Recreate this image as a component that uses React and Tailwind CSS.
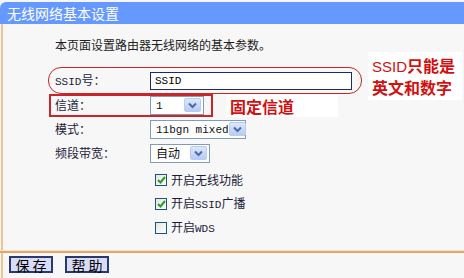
import React from 'react';

const cjk = { fontFamily: '"Noto Sans CJK SC", "Noto Sans", sans-serif' };

const Arrow = () => (
    <div className="ml-auto mr-[2px] shrink-0 w-[17px] h-[14px] rounded-[2px] border border-[#b9cbf3] bg-gradient-to-b from-[#dde7fd] to-[#b7cbf7] flex items-center justify-center">
        <svg width="9" height="7" viewBox="0 0 9 7">
            <path d="M1 1.5 L4.5 5 L8 1.5" fill="none" stroke="#4d6aa0" strokeWidth="2" />
        </svg>
    </div>
);

const Select = ({ width, children }) => (
    <div className={`${width} h-[19px] border border-[#7f9db9] bg-white flex items-center pl-[5px]`}>
        <span className="text-[12px] text-[#111] whitespace-nowrap">{children}</span>
        <Arrow />
    </div>
);

const Row = ({ label, children }) => (
    <div className="flex items-center h-[24px]">
        <div className="w-[95px] text-[12px] text-[#1b1b3a] whitespace-nowrap">{label}</div>
        {children}
    </div>
);

const Check = ({ checked, children }) => (
    <div className="flex items-center h-[24px] pl-[100px]">
        <div className="w-[12px] h-[12px] border border-[#1c5180] bg-gradient-to-br from-[#e6e6e0] to-white flex items-center justify-center">
            {checked && (
                <svg width="9" height="8" viewBox="0 0 9 8">
                    <path d="M1 4 L3.5 6.5 L8 1" fill="none" stroke="#21a121" strokeWidth="2" />
                </svg>
            )}
        </div>
        <span className="ml-[4px] text-[12px] text-[#1b1b3a]">{children}</span>
    </div>
);

const Mono = ({ children }) => (
    <span className="font-['Liberation_Mono',monospace] text-[11px] whitespace-nowrap">{children}</span>
);

const App = () => {
    return (
        <div className="relative w-[464px] h-[278px] bg-[#f7f7f7] overflow-hidden" style={cjk}>
            <div className="mt-[2px] h-[22px] bg-[#6699ff] rounded-tl-[6px] flex items-center pl-[7px] text-white text-[14px]">
                无线网络基本设置
            </div>

            <div className="ml-[1px] border-l-2 border-[#f0c48e] h-[226px] pl-[52px] pt-[12px]">
                <div className="h-[18px] flex items-center text-[12px] text-[#222]">
                    本页面设置路由器无线网络的基本参数。
                </div>
                <div className="h-[15px]" />
                <Row label={<><Mono>SSID</Mono>号：</>}>
                    <div className="w-[202px] h-[18px] border border-[#1b2a6b] bg-white flex items-center pl-[4px]">
                        <Mono>SSID</Mono>
                    </div>
                </Row>
                <Row label="信道：">
                    <Select width="w-[54px]"><Mono>1</Mono></Select>
                </Row>
                <Row label="模式：">
                    <Select width="w-[96px]"><Mono>11bgn mixed</Mono></Select>
                </Row>
                <Row label="频段带宽：">
                    <Select width="w-[60px]">自动</Select>
                </Row>
                <div className="h-[3px]" />
                <Check checked>开启无线功能</Check>
                <Check checked>开启<Mono>SSID</Mono>广播</Check>
                <Check>开启<Mono>WDS</Mono></Check>
            </div>

            <div className="h-[1px] bg-[#fbe2c2]" />
            <div className="h-[2px] bg-[#e2a768]" />
            <div className="ml-[1px] border-l-2 border-[#f0c48e] h-[27px] flex items-start gap-[12px] pl-[6px] pt-[3px]">
                <button className="w-[44px] h-[17px] border-2 border-[#2b3a6e] bg-[#d9dcf6] text-[14px] leading-none text-black flex items-center justify-center">
                    保 存
                </button>
                <button className="w-[44px] h-[17px] border-2 border-[#2b3a6e] bg-[#d9dcf6] text-[14px] leading-none text-black flex items-center justify-center">
                    帮 助
                </button>
            </div>

            {/* annotations */}
            <div className="absolute left-[48px] top-[67px] w-[314px] h-[27px] rounded-[13px] border border-[#c8262a]" />
            <div className="absolute left-[49px] top-[94px] w-[164px] h-[23px] border-2 border-[#c8262a]" />
            <div className="absolute left-[368px] top-[52px] w-[94px] h-[48px] bg-white flex flex-col justify-center text-[#d21010] text-[16px] leading-[20px] font-bold pl-[4px]">
                <div className="whitespace-nowrap"><span className="font-normal text-[15px] font-['Liberation_Sans',sans-serif]">SSID</span>只能是</div>
                <div className="whitespace-nowrap">英文和数字</div>
            </div>
            <div className="absolute left-[226px] top-[95px] w-[112px] h-[22px] bg-white flex items-center pl-[4px] text-[#d21010] text-[16px] font-bold">
                固定信道
            </div>
        </div>
    );
};

export default App;
